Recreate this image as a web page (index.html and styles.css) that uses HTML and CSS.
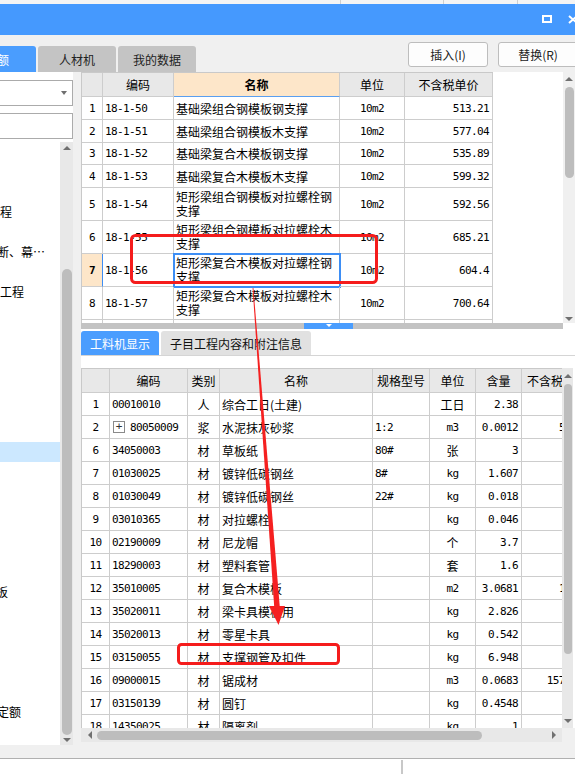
FILE: index.html
```html
<!DOCTYPE html>
<html lang="zh-CN">
<head>
<meta charset="utf-8">
<title>定额</title>
<link rel="stylesheet" href="styles.css">
</head>
<body>
<div class="app">
  <div class="topstrip"><span class="ts ts1"></span><span class="ts ts2"></span><span class="ts ts3"></span></div>
  <div class="titlebar">
    <svg class="ico-max" width="10" height="8" viewBox="0 0 10 8"><rect x="1" y="1" width="8" height="6" fill="none" stroke="#fff" stroke-width="2"/></svg>
    <svg class="ico-close" width="10" height="9" viewBox="0 0 10 9"><path d="M1 1L9 8M9 1L1 8" stroke="#fff" stroke-width="2" fill="none"/></svg>
  </div>
  <div class="toolbar">
    <div class="tabs">
      <div class="tab tab-active">定额</div>
      <div class="tab">人材机</div>
      <div class="tab">我的数据</div>
    </div>
    <div class="btns">
      <button class="btn">插入(I)</button>
      <button class="btn">替换(R)</button>
    </div>
  </div>

  <div class="main">
    <div class="left">
      <div class="select"><span class="caret"></span></div>
      <div class="input"></div>
      <div class="tree">
        <div class="tree-list">
          <div class="titem t1">程</div>
          <div class="titem t2"><span class="cut15">隔断、幕…</span></div>
          <div class="titem t2">工程</div>
          <div class="titem t3 tsel"></div>
          <div class="titem t4"><span class="cut16">模板</span></div>
          <div class="titem t5"><span class="cut3">定额</span></div>
        </div>
        <div class="vsb vsb-left">
          <span class="arr-up"></span>
          <span class="thumb thumb-left"></span>
          <span class="arr-down arr-down-left"></span>
        </div>
      </div>
    </div>
    <div class="gutter"></div>
    <div class="right">
      <div class="upper">
        <div class="ugrid-wrap">
          <div class="tgrid">
            <div class="trow h24 hdr">
              <div></div><div class="c">编码</div><div class="c namehdr">名称</div><div class="c">单位</div><div class="c">不含税单价</div>
            </div>
            <div class="trow"><div class="c mono">1</div><div class="l mono">18-1-50</div><div class="l">基础梁组合钢模板钢支撑</div><div class="c mono">10m2</div><div class="r mono">513.21</div></div>
            <div class="trow"><div class="c mono">2</div><div class="l mono">18-1-51</div><div class="l">基础梁组合钢模板木支撑</div><div class="c mono">10m2</div><div class="r mono">577.04</div></div>
            <div class="trow h22"><div class="c mono">3</div><div class="l mono">18-1-52</div><div class="l">基础梁复合木模板钢支撑</div><div class="c mono">10m2</div><div class="r mono">535.89</div></div>
            <div class="trow"><div class="c mono">4</div><div class="l mono">18-1-53</div><div class="l">基础梁复合木模板木支撑</div><div class="c mono">10m2</div><div class="r mono">599.32</div></div>
            <div class="trow h33"><div class="c mono">5</div><div class="l mono">18-1-54</div><div class="l two">矩形梁组合钢模板对拉螺栓钢<br>支撑</div><div class="c mono">10m2</div><div class="r mono">592.56</div></div>
            <div class="trow h33"><div class="c mono">6</div><div class="l mono">18-1-55</div><div class="l two">矩形梁组合钢模板对拉螺栓木<br>支撑</div><div class="c mono">10m2</div><div class="r mono">685.21</div></div>
            <div class="trow h33 cur"><div class="c mono rn-sel">7</div><div class="l mono">18-1-56</div><div class="l two cell-sel">矩形梁复合木模板对拉螺栓钢<br>支撑</div><div class="c mono">10m2</div><div class="r mono">604.4</div></div>
            <div class="trow h33"><div class="c mono">8</div><div class="l mono">18-1-57</div><div class="l two">矩形梁复合木模板对拉螺栓木<br>支撑</div><div class="c mono">10m2</div><div class="r mono">700.64</div></div>
            <div class="trow h33"><div></div><div></div><div></div><div></div><div></div></div>
          </div>
        </div>
        <div class="vsb vsb-upper">
          <span class="arr-up"></span>
          <span class="thumb thumb-upper"></span>
          <span class="arr-down arr-down-upper"></span>
        </div>
      </div>
      <div class="splitter-row">
        <div class="splitter"><span class="handle"><span class="handle-tri"></span></span></div>
      </div>
      <div class="subtabs">
        <div class="stab stab-active">工料机显示</div>
        <div class="stab">子目工程内容和附注信息</div>
      </div>
      <div class="subgap"></div>
      <div class="lower">
        <div class="lgrid-wrap">
          <div class="lgrid">
            <div class="lrow h24 hdr">
              <div></div><div class="c">编码</div><div class="c">类别</div><div class="c">名称</div><div class="c">规格型号</div><div class="c">单位</div><div class="c">含量</div><div class="c">不含税单价</div>
            </div>
            <div class="lrow"><div class="c mono">1</div><div class="l mono">00010010</div><div class="c">人</div><div class="l">综合工日(土建)</div><div class="l mono"></div><div class="c">工日</div><div class="r mono">2.38</div><div class="r mono"></div></div>
            <div class="lrow"><div class="c mono">2</div><div class="l mono"><span class="plus">+</span>80050009</div><div class="c">浆</div><div class="l">水泥抹灰砂浆</div><div class="l mono">1:2</div><div class="c mono">m3</div><div class="r mono">0.0012</div><div class="r mono">51.88</div></div>
            <div class="lrow"><div class="c mono">6</div><div class="l mono">34050003</div><div class="c">材</div><div class="l">草板纸</div><div class="l mono">80#</div><div class="c">张</div><div class="r mono">3</div><div class="r mono"></div></div>
            <div class="lrow"><div class="c mono">7</div><div class="l mono">01030025</div><div class="c">材</div><div class="l">镀锌低碳钢丝</div><div class="l mono">8#</div><div class="c mono">kg</div><div class="r mono">1.607</div><div class="r mono"></div></div>
            <div class="lrow"><div class="c mono">8</div><div class="l mono">01030049</div><div class="c">材</div><div class="l">镀锌低碳钢丝</div><div class="l mono">22#</div><div class="c mono">kg</div><div class="r mono">0.018</div><div class="r mono"></div></div>
            <div class="lrow"><div class="c mono">9</div><div class="l mono">03010365</div><div class="c">材</div><div class="l">对拉螺栓</div><div class="l mono"></div><div class="c mono">kg</div><div class="r mono">0.046</div><div class="r mono"></div></div>
            <div class="lrow"><div class="c mono">10</div><div class="l mono">02190009</div><div class="c">材</div><div class="l">尼龙帽</div><div class="l mono"></div><div class="c">个</div><div class="r mono">3.7</div><div class="r mono"></div></div>
            <div class="lrow"><div class="c mono">11</div><div class="l mono">18290003</div><div class="c">材</div><div class="l">塑料套管</div><div class="l mono"></div><div class="c">套</div><div class="r mono">1.6</div><div class="r mono"></div></div>
            <div class="lrow"><div class="c mono">12</div><div class="l mono">35010005</div><div class="c">材</div><div class="l">复合木模板</div><div class="l mono"></div><div class="c mono">m2</div><div class="r mono">3.0681</div><div class="r mono">13.68</div></div>
            <div class="lrow"><div class="c mono">13</div><div class="l mono">35020011</div><div class="c">材</div><div class="l">梁卡具模板用</div><div class="l mono"></div><div class="c mono">kg</div><div class="r mono">2.826</div><div class="r mono"></div></div>
            <div class="lrow"><div class="c mono">14</div><div class="l mono">35020013</div><div class="c">材</div><div class="l">零星卡具</div><div class="l mono"></div><div class="c mono">kg</div><div class="r mono">0.542</div><div class="r mono"></div></div>
            <div class="lrow"><div class="c mono">15</div><div class="l mono">03150055</div><div class="c">材</div><div class="l">支撑钢管及扣件</div><div class="l mono"></div><div class="c mono">kg</div><div class="r mono">6.948</div><div class="r mono"></div></div>
            <div class="lrow"><div class="c mono">16</div><div class="l mono">09000015</div><div class="c">材</div><div class="l">锯成材</div><div class="l mono"></div><div class="c mono">m3</div><div class="r mono">0.0683</div><div class="r mono">1576.36</div></div>
            <div class="lrow"><div class="c mono">17</div><div class="l mono">03150139</div><div class="c">材</div><div class="l">圆钉</div><div class="l mono"></div><div class="c mono">kg</div><div class="r mono">0.4548</div><div class="r mono"></div></div>
            <div class="lrow"><div class="c mono">18</div><div class="l mono">14350025</div><div class="c">材</div><div class="l">隔离剂</div><div class="l mono"></div><div class="c mono">kg</div><div class="r mono">1</div><div class="r mono"></div></div>
          </div>
        </div>
        <div class="vsb vsb-lower">
          <span class="arr-up"></span>
          <span class="thumb thumb-lower"></span>
          <span class="arr-down arr-down-lower"></span>
        </div>
        <div class="lower-edge"></div>
      </div>
      <div class="hbar">
        <div class="hsb">
          <span class="arr-left"></span>
          <span class="hthumb"></span>
          <span class="arr-right"></span>
        </div>
        <div class="corner"></div>
      </div>
      <div class="right-foot"></div>
    </div>
  </div>

  <div class="status"></div>
  <div class="footer"><span class="footer-cell"></span></div>

  <svg class="annot" width="575" height="774" viewBox="0 0 575 774">
    <rect x="131.5" y="235.5" width="245" height="47" rx="4" fill="none" stroke="#f51c1c" stroke-width="3"/>
    <rect x="178.5" y="644.5" width="160" height="19" rx="3" fill="none" stroke="#f51c1c" stroke-width="3"/>
    <polygon points="252.6,288 253.4,288 279.8,607 274.2,607" fill="#f52020"/>
    <polygon points="269,606 285,606 278.5,625" fill="#f52020"/>
  </svg>
</div>
</body>
</html>
```

FILE: styles.css
```css
* { box-sizing: border-box; }
html, body { margin: 0; padding: 0; }
body {
  width: 575px;
  height: 774px;
  overflow: hidden;
  background: #ffffff;
  font-family: "Noto Sans CJK SC", "Noto Sans", sans-serif;
  font-size: 12px;
  color: #000;
}
.app {
  position: relative;
  width: 575px;
  height: 774px;
  display: flex;
  flex-direction: column;
  overflow: hidden;
}

/* top strip */
.topstrip { height: 4px; flex: none; background: #f4f4f4; display: flex; }
.ts { display: block; height: 4px; border-right: 1px solid #cfcfcf; flex: none; }
.ts1 { width: 341px; }
.ts2 { width: 103px; }
.ts3 { width: 74px; }

/* title bar */
.titlebar {
  height: 31px;
  flex: none;
  background: #4599fe;
  display: flex;
  align-items: flex-start;
  padding-left: 542px;
  padding-top: 11px;
}
.titlebar svg { display: block; flex: none; }
.ico-close { margin-left: 16px; }

/* toolbar */
.toolbar {
  height: 37px;
  flex: none;
  background: #f0f0f0;
  display: flex;
  align-items: flex-end;
}
.tabs { display: flex; gap: 2px; margin-left: -42px; flex: none; }
.tab {
  width: 78px;
  height: 26px;
  background: #c4c4c4;
  border-radius: 3px 3px 0 0;
  display: flex;
  align-items: center;
  justify-content: center;
  color: #222;
  font-size: 12px;
}
.tab-active { background: #4a9dfe; color: #fff; }
.btns {
  display: flex;
  gap: 10px;
  margin-left: auto;
  margin-right: -3px;
  align-self: flex-start;
  margin-top: 7px;
  flex: none;
}
.btn {
  width: 80px;
  height: 25px;
  background: #fdfdfd;
  border: 1px solid #bdbdbd;
  border-radius: 3px;
  font-family: "Noto Sans CJK SC", "Noto Sans", sans-serif;
  font-size: 12px;
  color: #222;
  padding: 0;
}

/* main */
.main { height: 673px; flex: none; display: flex; }
.left { width: 73px; flex: none; background: #fff; display: flex; flex-direction: column; }
.gutter { width: 8px; flex: none; background: #f0f0f0; }
.right { width: 494px; flex: none; display: flex; flex-direction: column; background: #fff; }

.select {
  margin-top: 8px;
  margin-left: -1px;
  width: 74px;
  height: 26px;
  border: 1px solid #ababab;
  background: #fff;
  display: flex;
  align-items: center;
  justify-content: flex-end;
  padding-right: 5px;
}
.caret {
  width: 0; height: 0;
  border-left: 3px solid transparent;
  border-right: 3px solid transparent;
  border-top: 4px solid #6f6f6f;
}
.input {
  margin-top: 7px;
  margin-left: -1px;
  width: 74px;
  height: 26px;
  border: 1px solid #ababab;
  background: #fff;
}
.tree { margin-top: 3px; flex: 1; display: flex; min-height: 0; }
.tree-list { width: 60px; flex: none; overflow: hidden; }
.titem { height: 20px; line-height: 20px; white-space: nowrap; font-size: 12px; }
.t1 { margin-top: 60px; }
.t2 { margin-top: 20px; }
.t3 { margin-top: 140px; }
.t4 { margin-top: 120px; }
.t5 { margin-top: 100px; }
.tsel { background: #cce8ff; }
.cut15 { margin-left: -15px; }
.cut16 { margin-left: -16px; }
.cut3 { margin-left: -3px; }

/* scrollbars */
.vsb { display: flex; flex-direction: column; align-items: center; flex: none; }
.arr-up {
  display: block; width: 0; height: 0;
  border-left: 4px solid transparent;
  border-right: 4px solid transparent;
  border-bottom: 4px solid #707070;
}
.arr-down {
  display: block; width: 0; height: 0;
  border-left: 4px solid transparent;
  border-right: 4px solid transparent;
  border-top: 4px solid #707070;
}
.thumb { display: block; background: #bdbdbd; border-radius: 5px; }

.vsb-left { width: 13px; background: #e8e8e8; padding-left: 1px; }
.vsb-left .arr-up { margin-top: 4px; }
.thumb-left { width: 10px; height: 466px; margin-top: 119px; }
.arr-down-left { margin-top: 3px; }

.upper { height: 251px; flex: none; display: flex; }
.ugrid-wrap { width: 482px; flex: none; overflow: hidden; background: #fff; }
.vsb-upper { width: 12px; background: #f0f0f0; }
.vsb-upper .arr-up { margin-top: 5px; }
.thumb-upper { width: 9px; height: 91px; margin-top: 6px; }
.arr-down-upper { margin-top: 139px; }

/* grids */
.tgrid {
  width: 412px;
  border-top: 1px solid #c9c9c9;
  border-left: 1px solid #c9c9c9;
}
.trow, .lrow { display: grid; height: 23px; }
.trow { grid-template-columns: 21px 71px 166px 65px 88px; }
.lrow { grid-template-columns: 28px 78px 32px 153px 57px 46px 46px 71px; }
.trow > div, .lrow > div {
  border-right: 1px solid #cdcdcd;
  border-bottom: 1px solid #cdcdcd;
  display: flex;
  align-items: center;
  overflow: hidden;
  white-space: nowrap;
  min-width: 0;
}
.h24 { height: 24px; }
.h22 { height: 22px; }
.h33 { height: 33px; }
.hdr > div { background: #e8e8e8; font-size: 12px; }
.hdr > .namehdr { background: #fde6c9; font-weight: bold; border-bottom-color: #5a9ff0; }
.c { justify-content: center; }
.l { justify-content: flex-start; padding-left: 2px; }
.r { justify-content: flex-end; padding-right: 3px; }
.two { line-height: 14px; }
.mono {
  font-family: "DejaVu Sans Mono", "Liberation Mono", monospace;
  font-size: 11px;
  letter-spacing: -0.6px;
}
.trow > .rn-sel { background: #fde6c9; font-weight: bold; border-right-color: #3d8ef5; }
.cell-sel { outline: 2px solid #3d8ef5; outline-offset: -1px; }

.splitter-row { height: 6px; flex: none; display: flex; }
.splitter {
  width: 482px;
  height: 6px;
  background: #c3c3c3;
  display: flex;
  padding-left: 223px;
}
.handle {
  width: 49px;
  height: 6px;
  background: #4a9dfe;
  display: flex;
  justify-content: center;
  padding-top: 1px;
}
.handle-tri {
  width: 0; height: 0;
  border-left: 3px solid transparent;
  border-right: 3px solid transparent;
  border-top: 3px solid #fff;
}

.subtabs {
  height: 27px;
  flex: none;
  display: flex;
  gap: 2px;
  align-items: flex-end;
  border-bottom: 1px solid #d5d5d5;
}
.stab {
  height: 24px;
  width: 150px;
  background: #e1e1e1;
  border-radius: 3px 3px 0 0;
  display: flex;
  align-items: center;
  justify-content: center;
  font-size: 12px;
  color: #111;
}
.stab-active { width: 78px; background: #4a9dfe; color: #fff; }
.subgap { height: 12px; flex: none; }

.lower { height: 360px; flex: none; display: flex; }
.lgrid-wrap { width: 481px; flex: none; overflow: hidden; }
.lgrid {
  width: 512px;
  border-top: 1px solid #c9c9c9;
  border-left: 1px solid #c9c9c9;
}
.plus {
  width: 12px;
  height: 12px;
  border: 1px solid #8a8a8a;
  display: inline-flex;
  align-items: center;
  justify-content: center;
  font-size: 11px;
  line-height: 10px;
  letter-spacing: 0;
  margin-left: 1px;
  margin-right: 5px;
  color: #333;
}
.vsb-lower { width: 11px; background: #e8e8e8; }
.vsb-lower .arr-up { margin-top: 6px; }
.thumb-lower { width: 8px; height: 270px; margin-top: 6px; }
.arr-down-lower { margin-top: 65px; }
.lower-edge { width: 2px; flex: none; background: #fff; }

.hbar { height: 14px; flex: none; display: flex; }
.hsb {
  width: 481px;
  background: #e8e8e8;
  display: flex;
  align-items: center;
  padding-left: 7px;
}
.arr-left {
  display: block; width: 0; height: 0;
  border-top: 4px solid transparent;
  border-bottom: 4px solid transparent;
  border-right: 4px solid #707070;
}
.arr-right {
  display: block; width: 0; height: 0;
  border-top: 4px solid transparent;
  border-bottom: 4px solid transparent;
  border-left: 4px solid #707070;
  margin-left: 70px;
}
.hthumb {
  display: block;
  width: 385px;
  height: 9px;
  border-radius: 5px;
  background: #bdbdbd;
  margin-left: 5px;
}
.corner { width: 13px; background: #f0f0f0; }
.right-foot { height: 3px; flex: none; background: #f0f0f0; }

.status {
  height: 14px;
  flex: none;
  background: #f0f0f0;
  border-bottom: 1px solid #b0b0b0;
}
.footer { flex: 1; background: #fff; display: flex; padding-top: 1px; }
.footer-cell { width: 403px; border-right: 2px solid #c8c8c8; }

.annot { position: absolute; left: 0; top: 0; pointer-events: none; }
```
